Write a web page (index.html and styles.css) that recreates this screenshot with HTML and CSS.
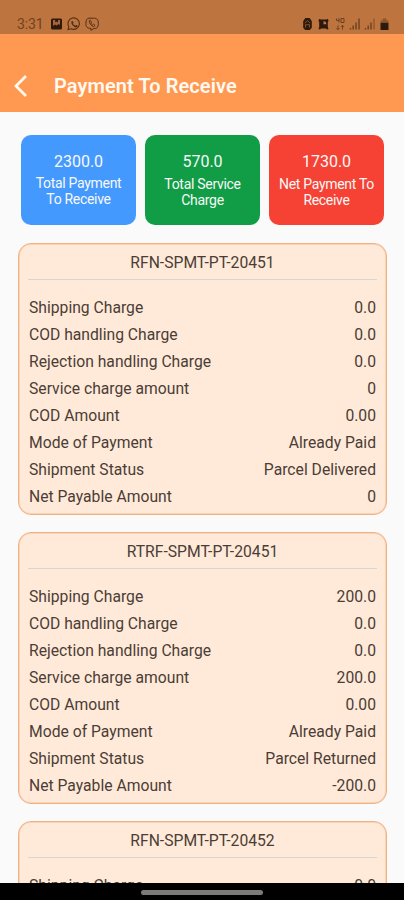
FILE: index.html
```
<!DOCTYPE html>
<html lang="en">
<head>
<meta charset="utf-8">
<title>Payment To Receive</title>
<link rel="stylesheet" href="styles.css">
</head>
<body>
<div class="screen">
  <div class="status">
    <span class="time">3:31</span>
    <svg class="notif" width="50" height="14" viewBox="0 0 50 14" fill="none">
      <rect x="1" y="1.500" width="11" height="11" rx="1.500" fill="#2d1a0c"/>
      <path d="M3 3h2.200v2.500L6.500 4.500 8 5.500V3h2v5l-1.500-1-1.800 1.500L5 7.500 3 9z" fill="#a8663a"/>
      <path d="M18 12.600l.9-2.900a5.700 5.700 0 1 1 2.400 2.100z" stroke="#4e2f19" stroke-width="1.100"/>
      <path d="M21.700 4.200c.5-.5 1-.3 1.300.4l.4 1c.1.4-.5.8-.3 1.100.5.9 1.200 1.500 2.100 1.900.4.1.8-.7 1.200-.5l1.200.6c.5.3-.1 1.200-.8 1.500-1.300.4-3.200-.6-4.300-2-1.200-1.500-1.500-3.200-.8-4z" fill="#4e2f19"/>
      <path d="M39 1.200h4.500c3.600 0 4.800 1.300 4.800 5.200s-1.200 5.200-4.800 5.200l-2.600 1.700v-1.900c-3.700-.1-5-1.300-5-5s1-5.200 3.100-5.200z" stroke="#4e2f19" stroke-width="1"/>
      <path d="M39.200 3.700c.2 3 1.700 5 4.500 6l1.400-1.300-1.700-1.200-.9.700c-.9-.5-1.400-1-1.700-1.900l.7-.8-1-1.800z" stroke="#4e2f19" stroke-width=".9"/>
    </svg>
    <svg class="system" width="88" height="14" viewBox="0 0 88 14">
      <path d="M1.200 4.200L3.300 1h4.400l2.100 3.200v6.600L7.800 13H3.200l-2-2.200z" fill="#2d1a0c"/>
      <path d="M2.800 6l2.700-2.300L8.200 6M3.500 10.500V7.700h4v2.800" fill="none" stroke="#9c5d31" stroke-width=".8"/>
      <path d="M17 2l2 .5h5L26 2l.5 2-.7 1v5l.7 2-1.500.6-1-1h-5l-1 1-1.500-.6.7-2V5l-.7-1z" fill="#2d1a0c"/>
      <path d="M21.500 4.200V7.200H24.300A2.800 2.800 0 0 0 21.500 4.200z" fill="#c07a48"/>
      <path d="M34.500 1.500v2h2.500M37 1v4.500M39 1.500h3v4h-3zM36 8.500v4M34.600 11.200l1.400 1.500 1.400-1.500M40.500 12.500v-4M39.100 9.800l1.400-1.500 1.400 1.500" fill="none" stroke="#633c21" stroke-width=".9"/>
      <path d="M48.500 12.500V11M51.200 12.500V8.500M54 12.500V5.500M57 12.500V1.500" stroke="#70431f" stroke-width="1.500"/>
      <path d="M63.500 12.500V11M66.200 12.500V8.500M69 12.500V5.500" stroke="#70431f" stroke-width="1.500"/>
      <path d="M72 12.500V1.500" stroke="#945a2f" stroke-width="1.500"/>
      <path d="M78.500 5.500h8v7.500h-8z" fill="#2d1a0c"/>
      <path d="M78.700 5.500V3.500h2V1.500h3.600v2h2v2z" fill="#8a542c"/>
    </svg>
  </div>
  <header class="appbar">
    <svg class="back" width="16" height="24" viewBox="0 0 16 24"><path d="M13 2L3 12l10 10" fill="none" stroke="#fff9f0" stroke-width="2.800"/></svg>
    <h1>Payment To Receive</h1>
  </header>
  <main>
    <section class="totals">
      <div class="total blue"><b>2300.0</b><span>Total Payment<br>To Receive</span></div>
      <div class="total green"><b>570.0</b><span>Total Service<br>Charge</span></div>
      <div class="total red"><b>1730.0</b><span>Net Payment To<br>Receive</span></div>
    </section>
    <article class="card">
      <h2>RFN-SPMT-PT-20451</h2>
      <dl>
        <div><dt>Shipping Charge</dt><dd>0.0</dd></div>
        <div><dt>COD handling Charge</dt><dd>0.0</dd></div>
        <div><dt>Rejection handling Charge</dt><dd>0.0</dd></div>
        <div><dt>Service charge amount</dt><dd>0</dd></div>
        <div><dt>COD Amount</dt><dd>0.00</dd></div>
        <div><dt>Mode of Payment</dt><dd>Already Paid</dd></div>
        <div><dt>Shipment Status</dt><dd>Parcel Delivered</dd></div>
        <div><dt>Net Payable Amount</dt><dd>0</dd></div>
      </dl>
    </article>
    <article class="card">
      <h2>RTRF-SPMT-PT-20451</h2>
      <dl>
        <div><dt>Shipping Charge</dt><dd>200.0</dd></div>
        <div><dt>COD handling Charge</dt><dd>0.0</dd></div>
        <div><dt>Rejection handling Charge</dt><dd>0.0</dd></div>
        <div><dt>Service charge amount</dt><dd>200.0</dd></div>
        <div><dt>COD Amount</dt><dd>0.00</dd></div>
        <div><dt>Mode of Payment</dt><dd>Already Paid</dd></div>
        <div><dt>Shipment Status</dt><dd>Parcel Returned</dd></div>
        <div><dt>Net Payable Amount</dt><dd>-200.0</dd></div>
      </dl>
    </article>
    <article class="card">
      <h2>RFN-SPMT-PT-20452</h2>
      <dl>
        <div><dt>Shipping Charge</dt><dd>0.0</dd></div>
      </dl>
    </article>
  </main>
  <div class="navbar"><i></i></div>
</div>
</body>
</html>
```
FILE: styles.css
```
* { box-sizing: border-box; margin: 0; padding: 0; }
body { font-family: Roboto, "Liberation Sans", sans-serif; background: #fafafa; }
.screen { width: 404px; height: 900px; overflow: hidden; display: flex; flex-direction: column; }
.status { height: 34px; flex: none; background: #bd743f; display: flex; align-items: flex-start; padding: 17px 14px 0 17px; }
.time { width: 33px; font-size: 14px; line-height: 14px; color: #70431f; letter-spacing: -0.1px; }
.system { margin-left: auto; }
.appbar { height: 78px; flex: none; background: #ff9850; display: flex; align-items: center; padding: 26px 13px 0; }
.back { margin-bottom: 1px; }
h1 { margin-left: 25px; font-size: 20px; line-height: 24px; font-weight: 600; letter-spacing: 0.08px; color: #fff9f0; white-space: nowrap; }
main { flex: 1; min-height: 0; overflow: hidden; padding: 23px 17px 0 18px; background: #fafafa; }
.totals { display: grid; grid-template-columns: repeat(3, 115px); gap: 9px; padding: 0 2px 0 3px; height: 90px; margin-bottom: 18px; }
.total { border-radius: 10px; color: #f8f8f8; display: flex; flex-direction: column; align-items: center; padding-top: 17px; text-align: center; }
.total b { font-weight: 400; font-size: 16px; line-height: 19px; margin-bottom: 5px; }
.total span { font-size: 14px; letter-spacing: -0.3px; line-height: 16px; white-space: nowrap; }
.blue { background: #4499ff; }
.green { background: #109d45; }
.red { background: #f54234; }
.total.blue b { margin-bottom: 4px; }
.card { height: 272px; border: 1px solid #f0b183; box-shadow: inset 0 0 0 1px #f9d3b6; border-radius: 13px; background: #ffeada; padding: 0 9px; margin-bottom: 17px; color: #4b3d35; }
.card h2 { height: 36px; border-bottom: 1px solid #d5d6d6; font-size: 15.700px; font-weight: 400; line-height: 38px; text-align: center; margin-bottom: 14px; }
dl div { height: 27px; display: flex; justify-content: space-between; padding: 0 1px; font-size: 15.700px; line-height: 27px; }
.navbar { height: 17px; flex: none; background: #000; display: flex; justify-content: center; align-items: center; padding-top: 1px; }
.navbar i { width: 122px; height: 5px; border-radius: 3px; background: #7b7b7b; }
```
